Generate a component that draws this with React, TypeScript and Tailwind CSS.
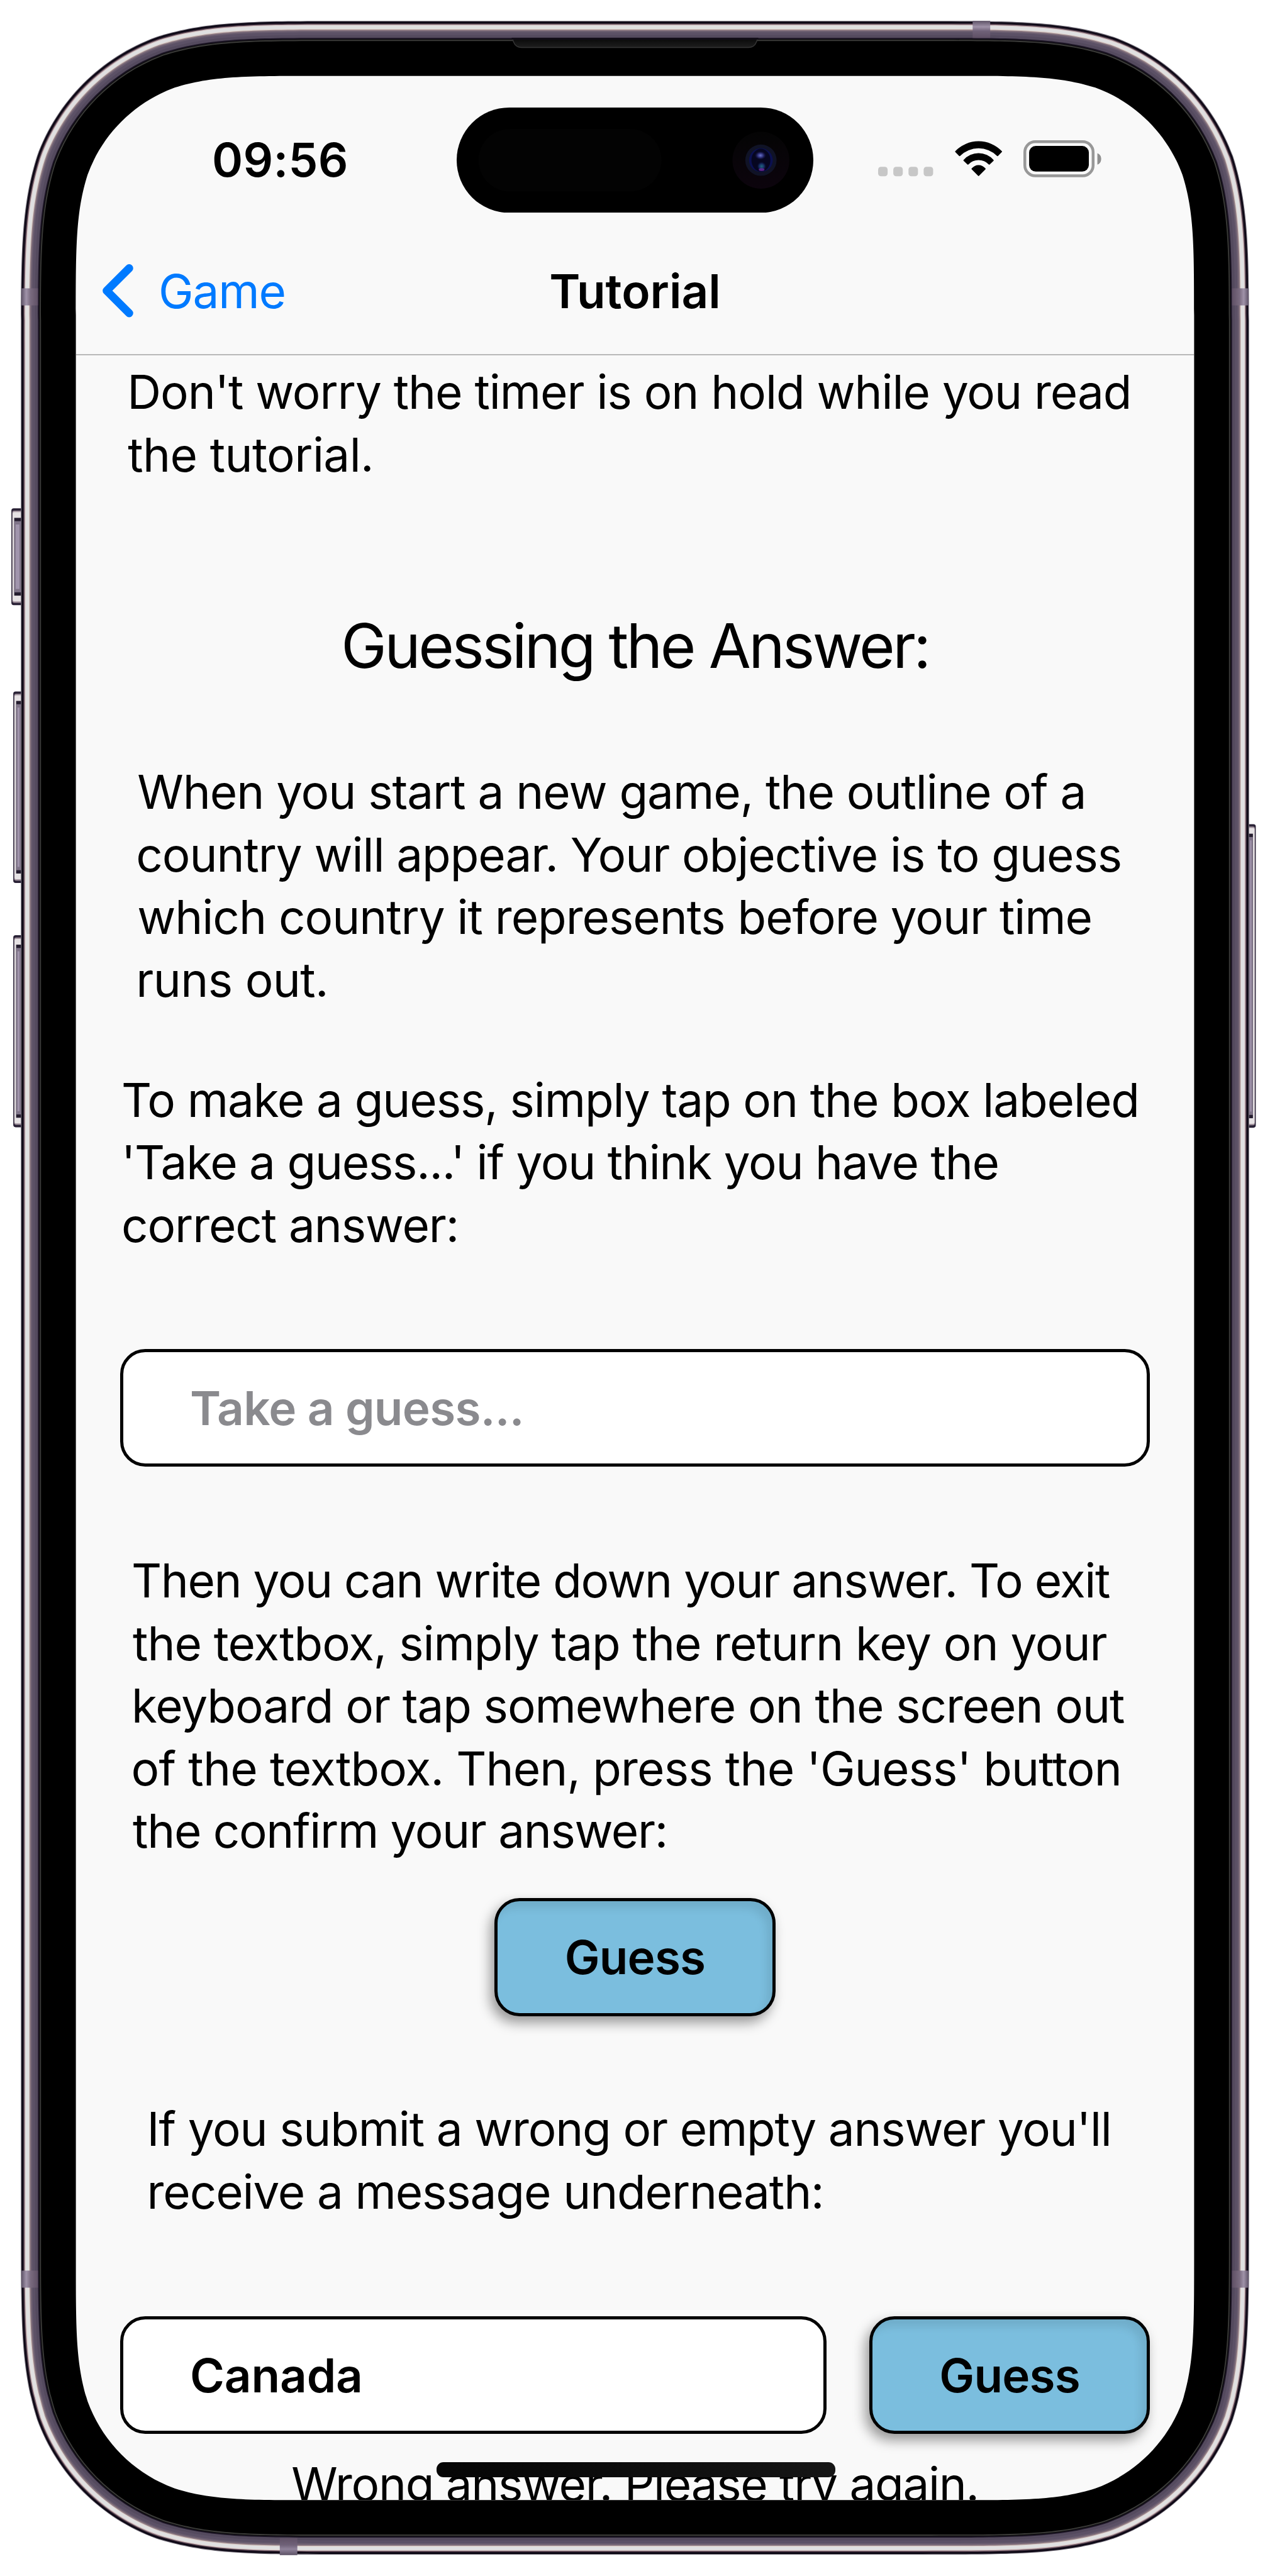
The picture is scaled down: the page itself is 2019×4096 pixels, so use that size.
import type { ReactNode } from "react";

type TextLine = { text: string; tracking: string };

const INTRO: TextLine[] = [
  { text: "Don't worry the timer is on hold while you read", tracking: "tracking-[-0.0142em]" },
  { text: "the tutorial.", tracking: "pl-[1px] tracking-[-0.0081em]" },
];

const OBJECTIVE: TextLine[] = [
  { text: "When you start a new game, the outline of a", tracking: "tracking-[-0.0141em]" },
  { text: "country will appear. Your objective is to guess", tracking: "-ml-[2px] tracking-[-0.0147em]" },
  { text: "which country it represents before your time", tracking: "tracking-[-0.0141em]" },
  { text: "runs out.", tracking: "-ml-[2px] tracking-[-0.0085em]" },
];

const MAKE_GUESS: TextLine[] = [
  { text: "To make a guess, simply tap on the box labeled", tracking: "tracking-[-0.0149em]" },
  { text: "'Take a guess...' if you think you have the", tracking: "tracking-[-0.0169em]" },
  { text: "correct answer:", tracking: "tracking-[-0.015em]" },
];

const CONFIRM: TextLine[] = [
  { text: "Then you can write down your answer. To exit", tracking: "-ml-[0.5px] tracking-[-0.0195em]" },
  { text: "the textbox, simply tap the return key on your", tracking: "pl-[1.5px] tracking-[-0.0143em]" },
  { text: "keyboard or tap somewhere on the screen out", tracking: "-ml-[0.5px] tracking-[-0.0148em]" },
  { text: "of the textbox. Then, press the 'Guess' button", tracking: "-ml-[1px] tracking-[-0.0115em]" },
  { text: "the confirm your answer:", tracking: "pl-[1.5px] tracking-[-0.0181em]" },
];

const WRONG: TextLine[] = [
  { text: "If you submit a wrong or empty answer you'll", tracking: "tracking-[-0.016em]" },
  { text: "receive a message underneath:", tracking: "tracking-[-0.0152em]" },
];

function Paragraph({ lines, className }: { lines: TextLine[]; className: string }) {
  return (
    <p className={`text-[74.6px] leading-[99.52px] whitespace-nowrap ${className}`}>
      {lines.map((line) => (
        <span key={line.text} className={`block ${line.tracking}`}>
          {line.text}
        </span>
      ))}
    </p>
  );
}

function TextBox({ children, className }: { children: ReactNode; className: string }) {
  return (
    <div
      className={`flex h-[187.7px] items-center rounded-[40px] border-[5px] border-black bg-white pt-[2px] pl-[106.3px] text-[74.6px] font-semibold whitespace-nowrap ${className}`}
    >
      {children}
    </div>
  );
}

function GuessButton() {
  return (
    <button
      type="button"
      className="flex h-[187.7px] w-[446.3px] shrink-0 items-center justify-center rounded-[40px] border-[5px] border-black bg-[#7bbede] pt-[2px] text-[74.6px] font-semibold tracking-[-0.0106em] shadow-[-6px_10px_20px_rgba(0,0,0,0.4),inset_-9px_11px_14px_rgba(0,0,0,0.09)]"
    >
      Guess
    </button>
  );
}

// Continuous-curvature rounded rectangle, as used for the device outline.
function squircle(x: number, y: number, w: number, h: number, r: number) {
  const a = 1.52866483 * r;
  const b = 1.08849323 * r;
  const c = 0.86840689 * r;
  const d = 0.63149399 * r;
  const e = 0.074911 * r;
  const f = 0.37282392 * r;
  const g = 0.16905899 * r;
  const R = x + w;
  const B = y + h;
  return [
    `M${x + a} ${y}H${R - a}`,
    `C${R - b} ${y} ${R - c} ${y} ${R - d} ${y + e}`,
    `C${R - f} ${y + g} ${R - g} ${y + f} ${R - e} ${y + d}`,
    `C${R} ${y + c} ${R} ${y + b} ${R} ${y + a}V${B - a}`,
    `C${R} ${B - b} ${R} ${B - c} ${R - e} ${B - d}`,
    `C${R - g} ${B - f} ${R - f} ${B - g} ${R - d} ${B - e}`,
    `C${R - c} ${B} ${R - b} ${B} ${R - a} ${B}H${x + a}`,
    `C${x + b} ${B} ${x + c} ${B} ${x + d} ${B - e}`,
    `C${x + f} ${B - g} ${x + g} ${B - f} ${x + e} ${B - d}`,
    `C${x} ${B - c} ${x} ${B - b} ${x} ${B - a}V${y + a}`,
    `C${x} ${y + b} ${x} ${y + c} ${x + e} ${y + d}`,
    `C${x + g} ${y + f} ${x + f} ${y + g} ${x + d} ${y + e}`,
    `C${x + c} ${y} ${x + b} ${y} ${x + a} ${y}Z`,
  ].join("");
}

const SCREEN_PATH = squircle(160, 160, 2358, 5112, 330);
const RIM_HOLE = squircle(120, 120, 2438, 5192, 372);
const BEZEL_INSET = 42.5;

const RIM_LAYERS: [number, string][] = [
  [0, "#6f6a75"],
  [1.5, "#0c0714"],
  [5, "#3b2b3a"],
  [7, "#9a8088"],
  [8.5, "#ddd0cf"],
  [10, "#e0e0e1"],
  [17, "#d9cac4"],
  [18.5, "#8d7a83"],
  [21, "#6b5e70"],
  [24, "#5c5166"],
  [30, "#544a5e"],
  [36, "#1b1424"],
  [38.5, "#0a0a0a"],
  [40, "#3b3b39"],
];

function outline(inset: number) {
  return squircle(44 + inset, 44 + inset, 2590 - inset * 2, 5343 - inset * 2, 452 - inset);
}

function SideButton({ x, y, h, flip = false, w }: { x: number; y: number; h: number; w: number; flip?: boolean }) {
  return (
    <g transform={flip ? `translate(${x + w} ${y}) scale(-1 1)` : `translate(${x} ${y})`}>
      <rect width={w + 20} height={h} rx={5} fill="#2a2236" />
      <rect x={2} y={5} width={w + 18} height={h - 10} rx={4} fill="#a3949f" />
      <rect x={2.5} y={8} width={w + 18} height={h - 16} rx={3} fill="#e6e2e4" />
      <rect x={6} y={20} width={w} height={h - 40} fill="#241c2e" />
      <rect x={6} y={27} width={w} height={h - 54} fill="#7f7488" />
      <rect x={9} y={34} width={w - 12} height={h - 68} fill="#a195ad" />
    </g>
  );
}

function DeviceFrame() {
  return (
    <svg
      viewBox="0 0 2678 5432"
      preserveAspectRatio="none"
      className="pointer-events-none absolute inset-0 h-full w-full"
      aria-hidden="true"
    >
      <defs>
        <linearGradient id="bandX" x1="0" x2="1" y1="0" y2="0">
          <stop offset="0" stopColor="#5d5266" />
          <stop offset="0.3" stopColor="#a093a9" />
          <stop offset="0.55" stopColor="#7a6b7f" />
          <stop offset="1" stopColor="#5f5065" />
        </linearGradient>
        <linearGradient id="bandXr" x1="1" x2="0" y1="0" y2="0">
          <stop offset="0" stopColor="#5d5266" />
          <stop offset="0.3" stopColor="#a093a9" />
          <stop offset="0.55" stopColor="#7a6b7f" />
          <stop offset="1" stopColor="#5f5065" />
        </linearGradient>
        <linearGradient id="bandY" x1="0" x2="0" y1="0" y2="1">
          <stop offset="0" stopColor="#5d5266" />
          <stop offset="0.35" stopColor="#a093a9" />
          <stop offset="0.6" stopColor="#6f6178" />
          <stop offset="1" stopColor="#5f5065" />
        </linearGradient>
        <linearGradient id="bandYr" x1="0" x2="0" y1="1" y2="0">
          <stop offset="0" stopColor="#5d5266" />
          <stop offset="0.35" stopColor="#8f829a" />
          <stop offset="0.6" stopColor="#6f6178" />
          <stop offset="1" stopColor="#5f5065" />
        </linearGradient>
        <linearGradient id="speaker" x1="0" x2="0" y1="0" y2="1">
          <stop offset="0" stopColor="#0b0b0b" />
          <stop offset="1" stopColor="#1e1e1e" />
        </linearGradient>
      </defs>
      <SideButton x={24} y={1072} w={20} h={204} />
      <SideButton x={28} y={1458} w={16} h={404} />
      <SideButton x={28} y={1972} w={16} h={405} />
      <SideButton x={2633} y={1738} w={15} h={640} flip />
      {RIM_LAYERS.map(([inset, color]) => (
        <path key={inset} fill={color} fillRule="evenodd" d={outline(inset) + RIM_HOLE} />
      ))}
      <path fill="#000" fillRule="evenodd" d={outline(BEZEL_INSET) + SCREEN_PATH} />
      <rect x={45} y={608} width={35} height={36} fill="url(#bandX)" />
      <rect x={45} y={4788} width={35} height={36} fill="url(#bandX)" />
      <rect x={2598} y={608} width={35} height={36} fill="url(#bandXr)" />
      <rect x={2598} y={4788} width={35} height={36} fill="url(#bandXr)" />
      <rect x={2051} y={44} width={37} height={36} fill="url(#bandY)" />
      <rect x={590} y={5352} width={37} height={36} fill="url(#bandYr)" />
      <path
        d="M1081 82.500C1084 93 1088 100 1100 100H1578C1590 100 1594 93 1597 82.500Z"
        fill="url(#speaker)"
        stroke="#343434"
        strokeWidth={2}
      />
      <rect x={1079} y={79.500} width={520} height={4} fill="#120d18" />
    </svg>
  );
}

function DynamicIsland() {
  return (
    <svg viewBox="0 0 752 222" className="h-[167.4px] w-[567px] shrink-0" aria-hidden="true">
      <defs>
        <radialGradient id="lensTop">
          <stop offset="0" stopColor="#6a74cc" />
          <stop offset="0.5" stopColor="#2e3078" />
          <stop offset="1" stopColor="#16154a" stopOpacity="0" />
        </radialGradient>
        <radialGradient id="lensBottom">
          <stop offset="0" stopColor="#21667f" />
          <stop offset="0.55" stopColor="#142c60" />
          <stop offset="1" stopColor="#0a0a3c" stopOpacity="0" />
        </radialGradient>
        <linearGradient id="ring" x1="0" x2="0" y1="0" y2="1">
          <stop offset="0" stopColor="#040404" />
          <stop offset="1" stopColor="#0c040d" />
        </linearGradient>
      </defs>
      <rect width="752" height="222" rx="111" fill="#000" />
      <rect x="46" y="45" width="386" height="132" rx="66" fill="#030303" />
      <circle cx="641.5" cy="111" r="60" fill="url(#ring)" />
      <circle cx="641.5" cy="111" r="33" fill="#101326" />
      <circle cx="641.5" cy="111" r="25" fill="#0b1050" />
      <ellipse cx="641.5" cy="111" rx="20" ry="24" fill="#060620" />
      <ellipse cx="640.500" cy="101" rx="12" ry="9" fill="url(#lensTop)" />
      <circle cx="643" cy="124" r="10" fill="url(#lensBottom)" />
      <ellipse cx="643" cy="131" rx="6" ry="3" fill="#7a2ba8" fillOpacity="0.7" />
    </svg>
  );
}

function StatusIcons() {
  return (
    <div className="mb-[4.5px] ml-[103.3px] flex items-center gap-[33.9px]">
      <svg viewBox="0 0 116 78" className="h-[58.8px] w-[87.5px]" aria-hidden="true">
        {[0, 32, 64, 96].map((x) => (
          <rect key={x} x={x} y="56" width="20" height="20" rx="6" fill="#c7c7c7" />
        ))}
      </svg>
      <svg viewBox="0 -2 100 78" className="h-[58.8px] w-[75.4px]" aria-hidden="true">
        <path d="M1 21Q0 22 1 23L9 31Q10 32 11 31A55.600 55.600 0 0 1 89 31Q90 32 91 31L99 23Q100 22 99 21A67.800 67.800 0 0 0 1 21Z" />
        <path d="M18.500 39.500Q17.500 40.500 18.500 41.500L26.500 49Q27.500 50 28.500 49A29.700 29.700 0 0 1 71.500 49Q72.500 50 73.500 49L81.500 41.500Q82.500 40.500 81.500 39.500A42 42 0 0 0 18.500 39.500Z" />
        <path d="M35.500 57.500Q34.500 58.500 35.500 59.500L49 73Q50 74 51 73L64.500 59.500Q65.500 58.500 64.500 57.500A18.500 18.500 0 0 0 35.500 57.500Z" />
      </svg>
      <svg viewBox="0 0 164 78" className="h-[58.8px] w-[123.6px]" aria-hidden="true">
        <rect x="3" y="3" width="144" height="72" rx="22" fill="none" stroke="#989898" strokeWidth="6" />
        <rect x="12" y="12" width="126" height="54" rx="14" />
        <path d="M156 27.500C161 29 164 33.500 164 39.500S161 50 156 51.500Z" fill="#8f8f8f" />
      </svg>
    </div>
  );
}

function Header() {
  return (
    <header className="h-[444.1px] border-b-2 border-[#b8b8b8] pt-[50.1px]">
      <div className="flex h-[167.4px] items-center pl-[216.4px]">
        <time className="w-[389px] shrink-0 text-[74.6px] leading-none font-semibold tracking-[0.004em]">09:56</time>
        <DynamicIsland />
        <StatusIcons />
      </div>
      <nav className="grid h-[224.6px] grid-cols-3 items-center pt-[24.1px] text-[74.6px] leading-none whitespace-nowrap">
        <a className="flex items-center gap-[40.5px] pl-[41.2px] tracking-[-0.016em] text-[#007aff]">
          <svg viewBox="0 0 66 112" className="h-[84.4px] w-[49.8px] shrink-0" aria-hidden="true">
            <path
              d="M57.500 8.500L10 56L57.500 103.500"
              fill="none"
              stroke="currentColor"
              strokeWidth="17"
              strokeLinecap="round"
              strokeLinejoin="round"
            />
          </svg>
          <span className="pt-[1px]">Game</span>
        </a>
        <h1 className="pt-[1px] text-center font-semibold">Tutorial</h1>
      </nav>
    </header>
  );
}

export default function App() {
  return (
    <div className="relative h-[4096px] w-[2019px] overflow-hidden bg-white px-[120.6px] pt-[120.6px] font-['Inter',sans-serif] text-black">
      <div className="relative h-[3854px] w-[1777.8px] overflow-hidden rounded-[226px] bg-[#f9f9f9]">
        <Header />
        <main className="flex flex-col">
          <Paragraph lines={INTRO} className="mt-[9.4px] pl-[81.6px]" />
          <h2 className="mt-[193.5px] text-center text-[97.25px] leading-[120.6px] tracking-[-0.0368em] whitespace-nowrap">
            Guessing the Answer:
          </h2>
          <Paragraph lines={OBJECTIVE} className="mt-[123.2px] pl-[97.7px]" />
          <Paragraph lines={MAKE_GUESS} className="mt-[91.2px] pl-[72.4px]" />
          <TextBox className="mx-[70.1px] mt-[146.6px] tracking-[-0.0096em] text-[#8a8a8e]">Take a guess...</TextBox>
          <Paragraph lines={CONFIRM} className="mt-[131.6px] pl-[89px]" />
          <div className="mt-[56.3px] flex justify-center">
            <GuessButton />
          </div>
          <Paragraph lines={WRONG} className="mt-[130.6px] pl-[113px]" />
          <div className="mx-[70.1px] mt-[147.4px] flex gap-[67.9px]">
            <TextBox className="grow tracking-[-0.002em]">Canada</TextBox>
            <GuessButton />
          </div>
          <p className="mt-[31px] text-center text-[74.6px] leading-[99.52px] tracking-[-0.0176em] whitespace-nowrap">
            Wrong answer. Please try again.
          </p>
        </main>
        <div className="absolute top-[3794.7px] left-[573px] h-[23.6px] w-[634px] rounded-[11px] bg-linear-to-r from-[#060606] to-[#161616]" />
      </div>
      <DeviceFrame />
    </div>
  );
}
